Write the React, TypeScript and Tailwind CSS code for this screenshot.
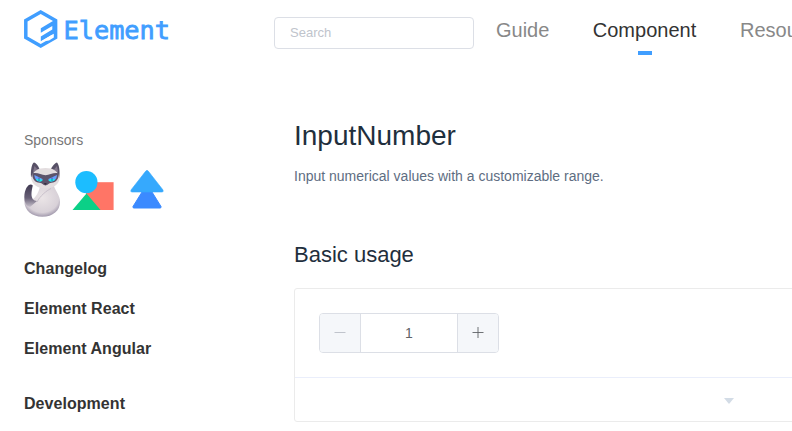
import React from "react";

function Logo() {
  return (
    <svg width="150" height="44" viewBox="0 0 150 44" className="block shrink-0 overflow-visible">
      <path
        d="M16.7 4 31.6 12.4V29.6L16.7 38 1.8 29.6V12.4Z"
        fill="none"
        stroke="#409eff"
        strokeWidth="3.5"
      />
      <path d="M16.8 20.3 28.5 13.2 32.5 11.5V30L28.5 30V26.4L16.8 33.2V28.4L28.3 21.6V17.9L16.8 24.8Z" fill="#409eff" />
      <path d="M16.8 33.4 29.8 25.8V29.6L25 32.5Z" fill="#ffffff" />
      <text
        x="39.5"
        y="31"
        textLength="106.5"
        lengthAdjust="spacingAndGlyphs"
        fill="#409eff"
        stroke="#409eff"
        strokeWidth="0.8"
        fontSize="25.5"
        fontFamily="'DejaVu Sans Mono', monospace"
      >
        Element
      </text>
    </svg>
  );
}

function CatIcon() {
  return (
    <svg width="36" height="56" viewBox="0 0 36 56" className="block">
      <defs>
        <radialGradient id="body" cx="0.5" cy="0.4" r="0.66">
          <stop offset="0" stopColor="#ebe5e7" />
          <stop offset="0.7" stopColor="#d8d1d8" />
          <stop offset="1" stopColor="#8a819a" />
        </radialGradient>
        <linearGradient id="tail" x1="0" y1="0" x2="0" y2="1">
          <stop offset="0" stopColor="#3f3950" />
          <stop offset="0.6" stopColor="#686077" />
          <stop offset="1" stopColor="#c7c0cb" />
        </linearGradient>
      </defs>
      <path d="M16 24C15 30 12 35 8 38C4 40 1 38 0.6 37C-1 47 7 54.8 18.3 54.8C29 54.8 36 48.5 36 40C36 33 31.5 29 29.5 23Z" fill="url(#body)" />
      <path d="M8.8 23.5C6 20 0.5 25 0.3 35C0.3 40 2 44 6 45L13 39C5.5 38.5 7.5 29 8.8 23.5Z" fill="url(#tail)" />
      <path d="M7 15C6.5 8 8 1 10 0.5C12 1 14.5 4 15.5 7L27 7C28.5 4 31 0.8 33 0.5C35.5 3 36 10 35.3 16Z" fill="#575066" />
      <path d="M9 10 10.5 4 14 8ZM29.5 8 33 4 34.2 10Z" fill="#80758a" />
      <path d="M7 16C8.5 9 14 6 21.5 6S34.5 9 35.7 16C35 22.5 29 26.5 21.5 26.5S8 22.5 7 16Z" fill="#e3dddf" />
      <path d="M8.3 11.5C13 10 17 13 21.5 13.3C26 13 30 10 34.8 11.5C35 17 32 20.5 27.5 20.8C24.5 21 23.5 23.5 21.5 23.5S18.5 21 15.5 20.8C11 20.5 8 17 8.3 11.5Z" fill="#5b536b" />
      <path d="M10.4 13 18.6 17C19 20.5 10.8 21 10.4 13ZM33 13 24.4 17C24 20.5 32.6 21 33 13Z" fill="#6a9dfc" />
      <path d="M12 17.3C14 16.5 17 17 18.6 18C17.5 20.3 13.5 20 12 17.3ZM24.4 18C26 17 29 16.5 31.3 17.3C29.8 20 25.5 20.3 24.4 18Z" fill="#14eeee" />
      <path d="M15 15.6V19M28 15.6V19" stroke="#31569e" strokeWidth="0.8" />
      <path d="M19.8 21.2H22.8L21.3 22.8Z" fill="#28232f" />
      <path d="M27 26.5C22 29 16 34 13 40" fill="none" stroke="#c2b9c5" strokeWidth="0.8" />
    </svg>
  );
}

function ShapesIcon() {
  return (
    <svg width="42" height="40" viewBox="0 0 42 40" className="block">
      <path d="M14 11.2H41.6V39H14Z" fill="#ff7566" />
      <path d="M14.5 22.5 28.5 39H0.5Z" fill="#0bd087" />
      <circle cx="14.4" cy="11.2" r="11.1" fill="#1cbdff" />
    </svg>
  );
}

function TreeIcon() {
  return (
    <svg width="34" height="40" viewBox="0 0 34 40" className="block">
      <path
        d="M12 22H22L31 36.5Q31.5 38 30 38H4Q2.5 38 3 36.5Z"
        fill="#3b8aff"
        stroke="#3b8aff"
        strokeWidth="1"
      />
      <path
        d="M16 0.8Q17 0 18 0.8L33 20Q33.8 22 32 22H2Q0.2 22 1 20Z"
        fill="#36a9fd"
        stroke="#36a9fd"
        strokeWidth="0.6"
      />
    </svg>
  );
}

function Header() {
  return (
    <header className="flex h-20 w-[900px] items-start pl-6">
      <div className="mt-[8px] w-[250px]">
        <Logo />
      </div>
      <input
        placeholder="Search"
        className="mt-[17px] block h-8 w-[200px] rounded-[4px] border border-[#dcdfe6] px-[15px] pb-[2px] text-[13px] outline-none placeholder:text-[#c0c4cc]"
      />
      <nav className="ml-[22px] flex text-[20px] leading-[30px] text-[#888]">
        <a className="mt-[15px] w-[53px]">Guide</a>
        <a className="mt-[15px] ml-[44px] flex w-[103px] flex-col items-center text-[#333]">
          Component
          <span className="mt-[6px] h-1 w-[14px] bg-[#409eff]" />
        </a>
        <a className="mt-[15px] ml-[44px]">Resource</a>
      </nav>
    </header>
  );
}

function Sidebar() {
  return (
    <aside className="w-[270px] shrink-0 pt-[50px]">
      <p className="text-[14px] leading-5 text-[#777]">Sponsors</p>
      <div className="mt-[12px] flex h-14 items-start">
        <CatIcon />
        <div className="mt-[9px] ml-[12px]">
          <ShapesIcon />
        </div>
        <div className="mt-[8px] ml-[16px]">
          <TreeIcon />
        </div>
      </div>
      <ul className="mt-[31px] text-[16px] leading-10 font-bold tracking-[0.05px] text-[#333]">
        <li>Changelog</li>
        <li>Element React</li>
        <li>Element Angular</li>
        <li className="mt-[15px]">Development</li>
      </ul>
    </aside>
  );
}

function NumberInput() {
  return (
    <div className="flex h-10 w-[180px] overflow-hidden rounded-[4px] border border-[#dcdfe6]">
      <button className="flex w-[41px] items-center justify-center border-r border-[#dcdfe6] bg-[#f5f7fa] text-[#c0c4cc]">
        <svg width="12" height="12" className="-translate-y-px">
          <path d="M0.5 6.5H11.5" stroke="currentColor" />
        </svg>
      </button>
      <span className="flex-1 text-center text-[14px] leading-[38px] text-[#606266]">1</span>
      <button className="flex w-[41px] items-center justify-center border-l border-[#dcdfe6] bg-[#f5f7fa] text-[#606266]">
        <svg width="12" height="12" className="-translate-y-px">
          <path d="M0.5 6.5H11.5M6 1V12" stroke="currentColor" strokeWidth="0.9" />
        </svg>
      </button>
    </div>
  );
}

export default function App() {
  return (
    <div className="h-[431px] w-full overflow-hidden bg-white font-['Liberation_Sans',Arial,sans-serif]">
      <Header />
      <div className="flex w-[1200px] pl-6">
        <Sidebar />
        <main className="w-[870px] shrink-0 pt-[36px]">
          <h1 className="text-[28px] leading-10 text-[#1f2f3d]">InputNumber</h1>
          <p className="mt-[10px] text-[14px] leading-5 text-[#5e6d82]">
            Input numerical values with a customizable range.
          </p>
          <h2 className="mt-[54px] text-[22px] leading-[30px] text-[#1f2f3d]">Basic usage</h2>
          <section className="mt-[18px] h-[134px] rounded-[3px] border border-[#ebebeb]">
            <div className="h-[88px] p-6">
              <NumberInput />
            </div>
            <div className="flex h-11 items-center justify-center border-t border-[#eaeefb]">
              <svg width="10" height="6" viewBox="0 0 10 6" className="mt-[3px]">
                <path d="M0 0H10L5 6Z" fill="#d3dce6" />
              </svg>
            </div>
          </section>
        </main>
      </div>
    </div>
  );
}
